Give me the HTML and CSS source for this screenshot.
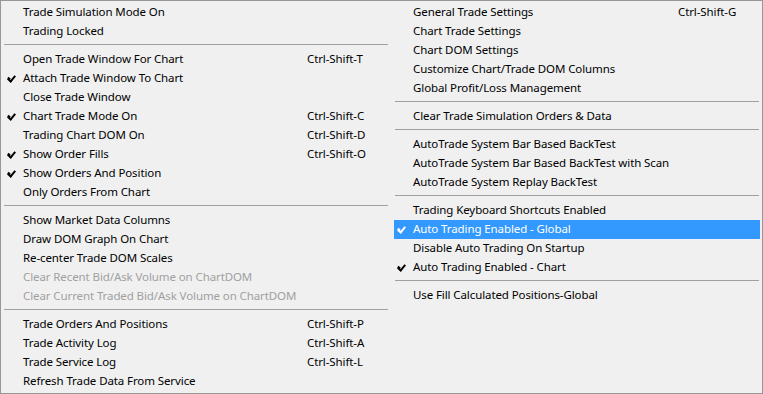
FILE: index.html
```html
<!DOCTYPE html>
<html lang="en">
<head>
    <meta charset="UTF-8">
    <title>Trade Menu</title>
    <link rel="stylesheet" href="styles.css">
</head>
<body>
    <div class="menu">
        <!-- left column -->
        <div class="column left">
            <div class="item"><span class="label">Trade Simulation Mode On</span></div>
            <div class="item"><span class="label">Trading Locked</span></div>
            <div class="separator"></div>
            <div class="item"><span class="label">Open Trade Window For Chart</span><span class="key">Ctrl-Shift-T</span></div>
            <div class="item checked"><span class="label">Attach Trade Window To Chart</span></div>
            <div class="item"><span class="label">Close Trade Window</span></div>
            <div class="item checked"><span class="label">Chart Trade Mode On</span><span class="key">Ctrl-Shift-C</span></div>
            <div class="item"><span class="label">Trading Chart DOM On</span><span class="key">Ctrl-Shift-D</span></div>
            <div class="item checked"><span class="label">Show Order Fills</span><span class="key">Ctrl-Shift-O</span></div>
            <div class="item checked"><span class="label">Show Orders And Position</span></div>
            <div class="item"><span class="label">Only Orders From Chart</span></div>
            <div class="separator"></div>
            <div class="item"><span class="label">Show Market Data Columns</span></div>
            <div class="item"><span class="label">Draw DOM Graph On Chart</span></div>
            <div class="item"><span class="label">Re-center Trade DOM Scales</span></div>
            <div class="item disabled"><span class="label">Clear Recent Bid/Ask Volume on ChartDOM</span></div>
            <div class="item disabled"><span class="label">Clear Current Traded Bid/Ask Volume on ChartDOM</span></div>
            <div class="separator"></div>
            <div class="item"><span class="label">Trade Orders And Positions</span><span class="key">Ctrl-Shift-P</span></div>
            <div class="item"><span class="label">Trade Activity Log</span><span class="key">Ctrl-Shift-A</span></div>
            <div class="item"><span class="label">Trade Service Log</span><span class="key">Ctrl-Shift-L</span></div>
            <div class="item"><span class="label">Refresh Trade Data From Service</span></div>
        </div>

        <!-- right column -->
        <div class="column right">
            <div class="item"><span class="label">General Trade Settings</span><span class="key">Ctrl-Shift-G</span></div>
            <div class="item"><span class="label">Chart Trade Settings</span></div>
            <div class="item"><span class="label">Chart DOM Settings</span></div>
            <div class="item"><span class="label">Customize Chart/Trade DOM Columns</span></div>
            <div class="item"><span class="label">Global Profit/Loss Management</span></div>
            <div class="separator"></div>
            <div class="item"><span class="label">Clear Trade Simulation Orders &amp; Data</span></div>
            <div class="separator"></div>
            <div class="item"><span class="label">AutoTrade System Bar Based BackTest</span></div>
            <div class="item"><span class="label">AutoTrade System Bar Based BackTest with Scan</span></div>
            <div class="item"><span class="label">AutoTrade System Replay BackTest</span></div>
            <div class="separator"></div>
            <div class="item"><span class="label">Trading Keyboard Shortcuts Enabled</span></div>
            <div class="item checked active"><span class="label">Auto Trading Enabled - Global</span></div>
            <div class="item"><span class="label">Disable Auto Trading On Startup</span></div>
            <div class="item checked"><span class="label">Auto Trading Enabled - Chart</span></div>
            <div class="separator"></div>
            <div class="item"><span class="label">Use Fill Calculated Positions-Global</span></div>
        </div>
    </div>
</body>
</html>
```

FILE: styles.css
```css
body {
    margin: 0;
    padding: 0;
    font-family: "Noto Sans", "Open Sans", sans-serif;
    font-size: 11.5px;
    letter-spacing: -0.1px;
    color: #000;
    background-color: #f0f0f0;
}

.menu {
    display: flex;
    width: 763px;
    height: 394px;
    box-sizing: border-box;
    border: 1px solid #979797;
    background-color: #f0f0f0;
}

.column {
    padding: 2px 0;
}

.left {
    width: 390px;
}

.right {
    width: 371px;
}

.item {
    position: relative;
    display: flex;
    height: 19px;
    line-height: 17px;
    margin: 0 2px 0 3px;
    padding-left: 19px;
    white-space: nowrap;
}

.left .label {
    width: 284px;
}

.right .label {
    width: 265px;
}

.item.disabled {
    color: #a0a0a0;
}

.item.active {
    background-color: #3399ff;
    color: #fff;
}

/* check mark */
.item.checked::before {
    content: "";
    position: absolute;
    left: 5px;
    top: 5px;
    width: 3px;
    height: 6px;
    border-right: 2px solid currentColor;
    border-bottom: 2px solid currentColor;
    transform: rotate(40deg);
    transform-origin: center;
}

.item.checked::after {
    content: "";
    position: absolute;
    left: 4px;
    top: 8px;
    width: 2px;
    height: 3px;
    background: currentColor;
    transform: rotate(-45deg);
}

.separator {
    height: 1px;
    margin: 3px 3px 5px 3px;
    background-color: #a0a0a0;
}

.right .separator {
    margin-left: 4px;
}
```
